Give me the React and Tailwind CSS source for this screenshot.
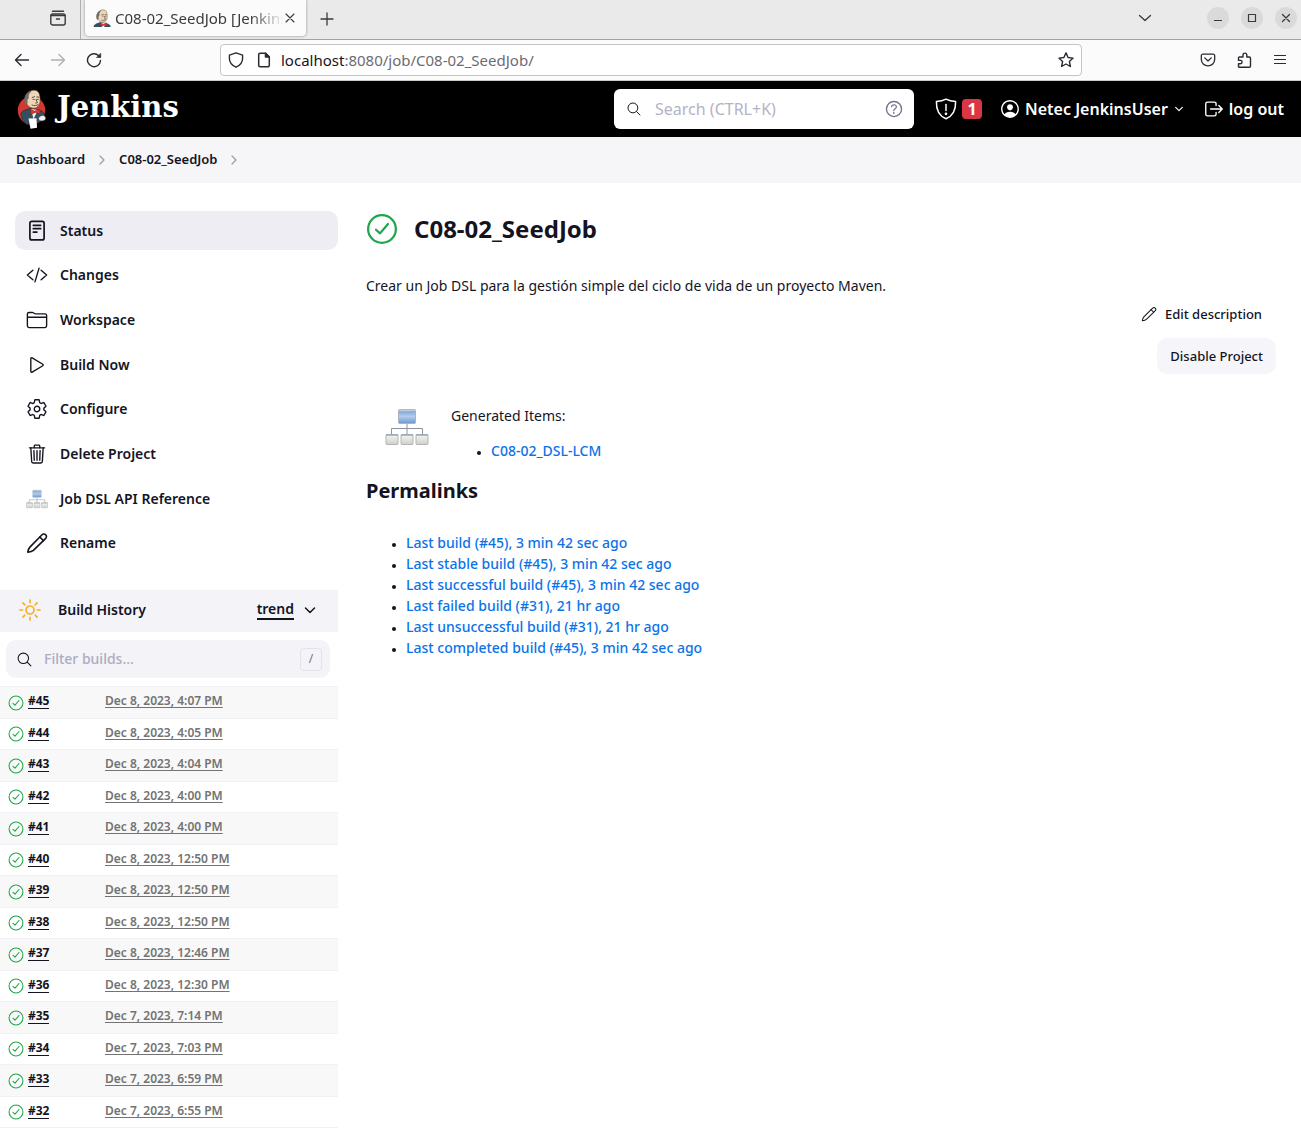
import React from "react";
import {
  IoCodeSlashOutline,
  IoFolderOutline,
  IoPlayOutline,
  IoSettingsOutline,
  IoTrashOutline,
  IoSearchOutline,
  IoHelpCircleOutline,
  IoPersonCircleOutline,
  IoLogOutOutline,
  IoChevronDownOutline,
  IoChevronForwardOutline,
} from "react-icons/io5";

function Line({ className, box = 24, width = 1.5, children }) {
  return (
    <svg
      className={className}
      viewBox={`0 0 ${box} ${box}`}
      fill="none"
      stroke="currentColor"
      strokeWidth={width}
      strokeLinecap="round"
      strokeLinejoin="round"
      aria-hidden="true"
    >
      {children}
    </svg>
  );
}

const Pencil = ({ className, width = 1.6 }) => (
  <Line className={className} box={22} width={width}>
    <path d="M1.8 20.2c.3-2.3.9-3.9 2.1-5.1L16 2.8a2.5 2.5 0 0 1 3.7 0 2.5 2.5 0 0 1 0 3.6L7.4 18.4c-1.2 1-3.2 1.5-5.6 1.8z" />
    <path d="M13.8 5l3.6 3.6" />
  </Line>
);

const StatusDoc = ({ className }) => (
  <Line className={className} box={22} width={1.7}>
    <rect x="3.9" y="1.3" width="14.2" height="18.6" rx="2" />
    <path d="M7.3 5.3h7.4M7.3 8.7h7.4M7.3 12.1h3.6" />
  </Line>
);

const CheckCircle = ({ className, width = 34 }) => (
  <Line className={className} box={512} width={width}>
    <circle cx="256" cy="256" r="222" />
    <path d="M352 176L224 326l-64-58" />
  </Line>
);

const Sun = ({ className }) => (
  <Line className={className} box={22} width={1.7}>
    <circle cx="11" cy="11" r="4" />
    <path d="M11 1v2.6M11 18.4V21M1 11h2.6M18.4 11H21M3.9 3.9l1.9 1.9M16.2 16.2l1.9 1.9M3.9 18.1l1.9-1.9M16.2 5.8l1.9-1.9" />
  </Line>
);

const leaves = [0, 15, 30];
const Tree = ({ className }) => (
  <svg className={className} viewBox="0 0 44 38" aria-hidden="true">
    <defs>
      <linearGradient id="node" x1="0" y1="0" x2="0" y2="1">
        <stop offset="0" stopColor="#6f9bd3" />
        <stop offset="0.5" stopColor="#b4cdec" />
        <stop offset="1" stopColor="#6d98cf" />
      </linearGradient>
      <linearGradient id="leaf" x1="0" y1="0" x2="0" y2="1">
        <stop offset="0" stopColor="#f6f6f4" />
        <stop offset="1" stopColor="#cfd0cb" />
      </linearGradient>
    </defs>
    <path d="M22 16v10M6.5 26v-5.5h31V26" fill="none" stroke="#8f9296" strokeWidth="1" />
    <rect x="13.5" y="1.5" width="17" height="14" rx="1" fill="url(#node)" stroke="#a9b4c4" />
    <path d="M14 2.5h16" stroke="#c4cbd6" strokeWidth="1.5" />
    {leaves.map((x) => (
      <g key={x}>
        <rect x={x + 1} y="26.5" width="12" height="10" rx="1" fill="url(#leaf)" stroke="#b3b5b5" />
        <path d={`M${x + 1} 27h12`} stroke="#9aa7ba" strokeWidth="1.5" />
      </g>
    ))}
  </svg>
);

const Butler = ({ className, bust = false }) => (
  <svg className={className} viewBox={bust ? "11 5 23 26" : "7 5 31 40"} aria-hidden="true">
    {!bust && <ellipse cx="21.5" cy="26.5" rx="13.7" ry="14" fill="#d33833" />}
    <path d="M11 29c2-2.5 6-4 9-4.500l7 1c4 1 6.500 2 7.500 4l-1 6-5 3-12 2c-3-3-6-7-5.500-11.500z" fill="#335061" stroke="#1b2a33" strokeWidth=".6" />
    <path d="M21 25l2.500 10 4.500-9z" fill="#f4f4f4" />
    <path d="M15.500 13c1-4.500 5-7 9-6.800s5.500 3.800 5.600 8.300c.2 4-.3 6.500-3.500 9-3 1.500-7.200.2-9.200-2.500-1.800-2.500-2.600-5-1.900-8z" fill="#f0d6b7" stroke="#4a423c" strokeWidth=".6" />
    <path d="M15.200 20.500c-2-5-.8-11 5-13.500l1.300.6c-2.500 1.800-3.300 4.200-2.600 6.800l-1.300.6-.3 4.500z" fill="#6f6a66" />
    <path d="M22.200 13.500l2.300-.8M26.800 12.900l2 .3M23 15.400h1.300M27.200 15.400h1.100M26 15.400l1.400 3.300-1.600.4M22 21c2 1 4.500.7 6-.4" fill="none" stroke="#3a302a" strokeWidth=".8" strokeLinecap="round" />
    <path d="M17.500 15.500c-1.500.3-1.200 3.200.6 3.200" fill="none" stroke="#8a6f57" strokeWidth=".7" />
    <path d="M20.500 25.200l4.200 1.800 4.800-2 .8 5-5-1.600-4.600 2.200z" fill="#d33833" stroke="#7d1715" strokeWidth=".4" />
    {!bust && (
      <>
        <path d="M18.500 34.500l8-.3.500 9.500-6.500 1.100z" fill="#fff" />
        <path d="M28.500 34c1.500-2.500 5-3.500 6.500-1.500s0 4.500-2.500 4.200c-1.800.6-3.800-.3-4-2.700z" fill="#efefef" stroke="#444" strokeWidth=".5" />
      </>
    )}
  </svg>
);

function BrowserChrome() {
  return (
    <header>
      <div className="flex h-10 items-stretch border-b border-[#a0a4a0] bg-[#eaeaea] text-[#3a3a3e]">
        <button aria-label="Recent browsing" className="flex w-[81px] items-center justify-end border-r border-[#b0b0b0] pb-1 pr-[14px]">
          <Line className="h-4 w-4" box={16} width={1.4}>
            <path d="M2.5 1.2h11" />
            <rect x="0.8" y="4" width="14.4" height="11" rx="2" />
            <path d="M1 5.5h14M6.500 9h3" />
          </Line>
        </button>
        <div className="ml-1 flex h-9 w-[221px] items-center rounded-b-[4px] bg-[#fbfbfb] px-2 shadow-[0_0_3px_rgba(0,0,0,0.4)]">
          <Butler bust className="h-[18px] w-[18px] shrink-0" />
          <span className="ml-1 w-[169px] overflow-hidden whitespace-nowrap text-[15px] leading-5 [mask-image:linear-gradient(to_right,black_80%,transparent)]">
            C08-02_SeedJob [Jenkins]
          </span>
          <button aria-label="Close tab">
            <Line className="h-3 w-3" box={12} width={1.1}>
              <path d="M2 2l8 8M10 2l-8 8" />
            </Line>
          </button>
        </div>
        <button aria-label="New tab" className="ml-[14px] flex items-center pb-[2px]">
          <Line className="h-[14px] w-[14px]" box={14} width={1.3}>
            <path d="M7 1v12M1 7h12" />
          </Line>
        </button>
        <div className="ml-auto flex items-center gap-3 pb-1 pr-1">
          <button aria-label="List all tabs" className="mr-[43px]">
            <Line className="h-[14px] w-[14px]" box={14} width={1.3}>
              <path d="M1.5 4.500l5.500 5 5.500-5" />
            </Line>
          </button>
          <button aria-label="Minimize" className="h-[22px] w-[22px] rounded-full bg-[#dadada]">
            <Line className="h-[22px] w-[22px]" box={22} width={1.2}>
              <path d="M7.500 13.500h7" />
            </Line>
          </button>
          <button aria-label="Maximize" className="h-[22px] w-[22px] rounded-full bg-[#dadada]">
            <Line className="h-[22px] w-[22px]" box={22} width={1.2}>
              <path d="M7.500 7.500h7v7h-7z" />
            </Line>
          </button>
          <button aria-label="Close" className="h-[22px] w-[22px] rounded-full bg-[#dadada]">
            <Line className="h-[22px] w-[22px]" box={22} width={1.3}>
              <path d="M7.500 7.500l7 7M14.500 7.500l-7 7" />
            </Line>
          </button>
        </div>
      </div>
      <div className="flex h-[41px] items-center border-b border-[#cccccc] bg-[#fbfbfb] pl-[14px] pr-[13px] text-[#2b2a33]">
        <div className="flex w-[206px] items-center gap-5">
          <button aria-label="Back">
            <Line className="h-4 w-4" box={16} width={1.4}>
              <path d="M14.500 8H1.500M7 2.500L1.500 8 7 13.500" />
            </Line>
          </button>
          <button aria-label="Forward" disabled className="text-[#b0b0b3]">
            <Line className="h-4 w-4" box={16} width={1.4}>
              <path d="M1.500 8h13M9 2.500L14.500 8 9 13.500" />
            </Line>
          </button>
          <button aria-label="Reload">
            <Line className="h-4 w-4" box={16} width={1.4}>
              <path d="M14.500 8.500A6.500 6.500 0 1 1 12.500 3.500L14 4.700" />
              <path d="M14.700 1.500v4h-4z" fill="currentColor" strokeWidth="0.6" />
            </Line>
          </button>
        </div>
        <div className="flex h-8 max-w-[862px] flex-1 items-center rounded-[4px] border border-[#c4c4c4] bg-white px-[7px]">
          <Line className="h-4 w-4" box={16} width={1.4}>
            <path d="M8 .8l6.600 2.300v3.400c0 4-2.800 7-6.600 8.700C4.200 13.500 1.400 10.500 1.400 6.500V3.100z" />
          </Line>
          <Line className="ml-3 h-4 w-4" box={16} width={1.5}>
            <path d="M9.500 1.200H4.200a1.500 1.500 0 0 0-1.500 1.500v10.600a1.500 1.500 0 0 0 1.500 1.500h7.600a1.500 1.500 0 0 0 1.500-1.500V5z" />
            <path d="M9.500 1.200V5h3.800z" fill="currentColor" />
          </Line>
          <div className="ml-[9px] flex-1 text-[15px] leading-5 text-[#6c6c73]">
            <span className="text-[#15141a]">localhost</span>:8080/job/C08-02_SeedJob/
          </div>
          <button aria-label="Bookmark this page">
            <Line className="h-4 w-4" box={16} width={1.4}>
              <path d="M8 .9l2.100 4.600 5 .6-3.700 3.400 1 5L8 12l-4.400 2.500 1-5L.9 6.100l5-.6z" />
            </Line>
          </button>
        </div>
        <div className="ml-auto flex items-center gap-5">
          <button aria-label="Save to Pocket">
            <Line className="h-4 w-4" box={16} width={1.3}>
              <path d="M2.800 2.200h10.400a1.500 1.500 0 0 1 1.500 1.500v3.500a6.700 6.700 0 0 1-13.400 0V3.700a1.500 1.500 0 0 1 1.500-1.500z" />
              <path d="M4.700 5.900L8 9l3.300-3.100" />
            </Line>
          </button>
          <button aria-label="Extensions">
            <Line className="h-4 w-4" box={16} width={1.4}>
              <path d="M3 15.200h10.300a1.200 1.200 0 0 0 1.200-1.200V6.200a1.200 1.200 0 0 0-1.200-1.200h-2.500V3a1.900 1.900 0 0 0-3.800 0v2H3.500a1 1 0 0 0-1 1v2.400h1.900a1.700 1.700 0 0 1 0 3.400H2.500v2.900z" />
            </Line>
          </button>
          <button aria-label="Menu">
            <Line className="h-4 w-4" box={16} width={1.2}>
              <path d="M2.500 3.500h11M2.500 7.500h11M2.500 11.500h11" />
            </Line>
          </button>
        </div>
      </div>
    </header>
  );
}

function JenkinsHeader() {
  return (
    <div className="flex h-14 items-center bg-black px-[17px] text-base font-semibold text-white">
      <a href="#home" className="flex items-center">
        <Butler className="h-10 w-[31px]" />
        <span className="ml-[9px] pb-1 font-['DejaVu_Serif',serif] text-[29px] font-bold leading-8">Jenkins</span>
      </a>
      <label className="ml-auto flex h-10 w-[300px] items-center rounded-[6px] bg-white pl-3 pr-[9px]">
        <IoSearchOutline className="h-4 w-4 text-[#14141f]" />
        <input
          type="search"
          aria-label="Search"
          placeholder="Search (CTRL+K)"
          className="ml-[13px] w-0 flex-1 bg-transparent text-base font-normal text-black outline-none placeholder:text-[#b3b3c6]"
        />
        <IoHelpCircleOutline className="h-[22px] w-[22px] text-[#73738c]" />
      </label>
      <a href="#security" aria-label="1 security warning" className="ml-5 flex items-center gap-1">
        <Line className="h-6 w-6" box={24} width={1.5}>
          <path d="M12 2.200c3 1.600 5.800 2.200 9.600 2.400C21.900 13.500 18.500 19 12 21.800 5.500 19 2.100 13.500 2.400 4.600 6.200 4.400 9 3.800 12 2.200z" />
          <path d="M12 7.500v6" />
          <circle cx="12" cy="16.800" r=".6" fill="currentColor" />
        </Line>
        <span className="flex h-5 w-5 items-center justify-center rounded-[4px] bg-[#dc3545] font-bold leading-5">1</span>
      </a>
      <a href="#user" className="ml-[17px] flex items-center">
        <IoPersonCircleOutline className="h-[22px] w-[22px]" />
        <span className="ml-1">Netec JenkinsUser</span>
        <IoChevronDownOutline className="ml-[5px] h-3 w-3" />
      </a>
      <a href="#logout" className="ml-[18px] flex items-center">
        <IoLogOutOutline className="h-[22px] w-[22px]" />
        <span className="ml-1">log out</span>
      </a>
    </div>
  );
}

const tasks = [
  ["Status", StatusDoc],
  ["Changes", IoCodeSlashOutline],
  ["Workspace", IoFolderOutline],
  ["Build Now", IoPlayOutline],
  ["Configure", IoSettingsOutline],
  ["Delete Project", IoTrashOutline],
  ["Job DSL API Reference", Tree],
  ["Rename", Pencil],
];

const builds = [
  ["#45", "Dec 8, 2023, 4:07 PM"],
  ["#44", "Dec 8, 2023, 4:05 PM"],
  ["#43", "Dec 8, 2023, 4:04 PM"],
  ["#42", "Dec 8, 2023, 4:00 PM"],
  ["#41", "Dec 8, 2023, 4:00 PM"],
  ["#40", "Dec 8, 2023, 12:50 PM"],
  ["#39", "Dec 8, 2023, 12:50 PM"],
  ["#38", "Dec 8, 2023, 12:50 PM"],
  ["#37", "Dec 8, 2023, 12:46 PM"],
  ["#36", "Dec 8, 2023, 12:30 PM"],
  ["#35", "Dec 7, 2023, 7:14 PM"],
  ["#34", "Dec 7, 2023, 7:03 PM"],
  ["#33", "Dec 7, 2023, 6:59 PM"],
  ["#32", "Dec 7, 2023, 6:55 PM"],
];

function Sidebar() {
  return (
    <aside className="w-[338px] shrink-0">
      <nav className="flex h-[352px] flex-col justify-between pl-[15px]">
        {tasks.map(([label, Icon], i) => (
          <a
            key={label}
            href="#task"
            className={
              i === 0
                ? "flex h-[39px] items-center gap-3 rounded-[10px] bg-[#ededf3] pl-[11px] text-sm font-semibold"
                : "flex h-[39px] items-center gap-3 rounded-[10px] pl-[11px] text-sm font-semibold"
            }
          >
            <Icon className="h-[22px] w-[22px] shrink-0" />
            {label}
          </a>
        ))}
      </nav>
      <section className="mt-[27px]">
        <div className="flex h-[42px] items-center bg-[#f3f3f8] pb-[2px] pl-[19px] pr-[21px] text-sm font-semibold">
          <Sun className="h-[22px] w-[22px] text-[#fcaf26]" />
          <h2 className="ml-[17px]">Build History</h2>
          <a href="#trend" className="ml-auto border-b-2 border-current leading-[18px]">
            trend
          </a>
          <button aria-label="Collapse build history" className="ml-[9px]">
            <Line className="h-[14px] w-[14px]" box={14} width={1.5}>
              <path d="M2.5 5l4.500 4.500L11.500 5" />
            </Line>
          </button>
        </div>
        <label className="ml-[6px] mr-2 mt-2 flex h-[38px] items-center rounded-[10px] bg-[#f3f3f8] pl-[10px] pr-2">
          <IoSearchOutline className="h-[17px] w-[17px]" />
          <input
            type="search"
            aria-label="Filter builds"
            placeholder="Filter builds..."
            className="ml-[11px] w-0 flex-1 bg-transparent text-sm font-medium outline-none placeholder:text-[#adadbe]"
          />
          <kbd className="flex h-[23px] w-[22px] items-center justify-center rounded-[4px] border border-[#e2e2ea] font-['Noto_Sans',sans-serif] text-xs text-[#73738c]">
            /
          </kbd>
        </label>
        <table className="mt-2 w-full border-collapse text-xs">
          <tbody>
            {builds.map(([id, date], i) => (
              <tr key={id} className={i % 2 ? "h-[31px] border-y border-[#f1f1f5]" : "h-[32px] border-y border-[#f1f1f5] bg-[#f8f8f8]"}>
                <td className="w-[105px] p-0 pl-2">
                  <a href="#build" className="flex items-center gap-1">
                    <CheckCircle className="h-4 w-4 text-[#1ea64b]" />
                    <span className="pb-[2px]">
                      <span className="block border-b border-current font-bold leading-[14px]">{id}</span>
                    </span>
                  </a>
                </td>
                <td className="p-0 pb-[3px]">
                  <a href="#build" className="font-semibold leading-4 text-[#737373] underline underline-offset-2">
                    {date}
                  </a>
                </td>
              </tr>
            ))}
          </tbody>
        </table>
      </section>
    </aside>
  );
}

const permalinks = [
  "Last build (#45), 3 min 42 sec ago",
  "Last stable build (#45), 3 min 42 sec ago",
  "Last successful build (#45), 3 min 42 sec ago",
  "Last failed build (#31), 21 hr ago",
  "Last unsuccessful build (#31), 21 hr ago",
  "Last completed build (#45), 3 min 42 sec ago",
];

function Main() {
  return (
    <main className="flex-1 pl-7 pr-[25px] text-sm">
      <div className="flex h-9 items-center gap-4">
        <CheckCircle className="h-8 w-8 text-[#1ea64b]" width={36} />
        <h1 className="text-2xl font-bold">C08-02_SeedJob</h1>
      </div>
      <p className="mt-7 leading-[21px]">Crear un Job DSL para la gestión simple del ciclo de vida de un proyecto Maven.</p>
      <div className="mt-2 flex flex-col items-end gap-[14px] text-[13px] font-medium leading-5">
        <a href="#edit" className="flex items-center gap-2 pr-[14px]">
          <Pencil className="h-4 w-4" width={1.4} />
          Edit description
        </a>
        <button className="h-9 rounded-[10px] bg-[#f6f6fa] px-[13px]">Disable Project</button>
      </div>
      <div className="mt-[31px] flex pl-[19px]">
        <Tree className="mt-[3px] h-[38px] w-[44px]" />
        <div className="ml-[22px]">
          <p className="leading-[21px]">Generated Items:</p>
          <ul className="mt-[14px] list-disc pl-10 leading-[21px]">
            <li className="marker:text-[10px]">
              <a href="#item" className="font-medium text-[#0b73e8]">C08-02_DSL-LCM</a>
            </li>
          </ul>
        </div>
      </div>
      <h2 className="mt-[15px] text-xl font-bold leading-[30px]">Permalinks</h2>
      <ul className="mt-[26px] list-disc pl-10 leading-[21px]">
        {permalinks.map((p) => (
          <li key={p} className="marker:text-[10px]">
            <a href="#permalink" className="font-medium text-[#0b73e8]">{p}</a>
          </li>
        ))}
      </ul>
    </main>
  );
}

export default function App() {
  return (
    <div className="min-h-screen overflow-hidden bg-white font-['Noto_Sans',sans-serif] text-[#14141f]">
      <BrowserChrome />
      <JenkinsHeader />
      <nav aria-label="Breadcrumbs" className="flex h-[46px] items-center bg-[#f6f6f9] pl-4 text-[13px] font-semibold">
        <a href="#dashboard">Dashboard</a>
        <IoChevronForwardOutline className="mx-[10px] h-[14px] w-[14px] text-[#9d9db0]" />
        <a href="#job">C08-02_SeedJob</a>
        <IoChevronForwardOutline className="mx-[10px] h-[14px] w-[14px] text-[#9d9db0]" />
      </nav>
      <div className="flex pt-7">
        <Sidebar />
        <Main />
      </div>
    </div>
  );
}
